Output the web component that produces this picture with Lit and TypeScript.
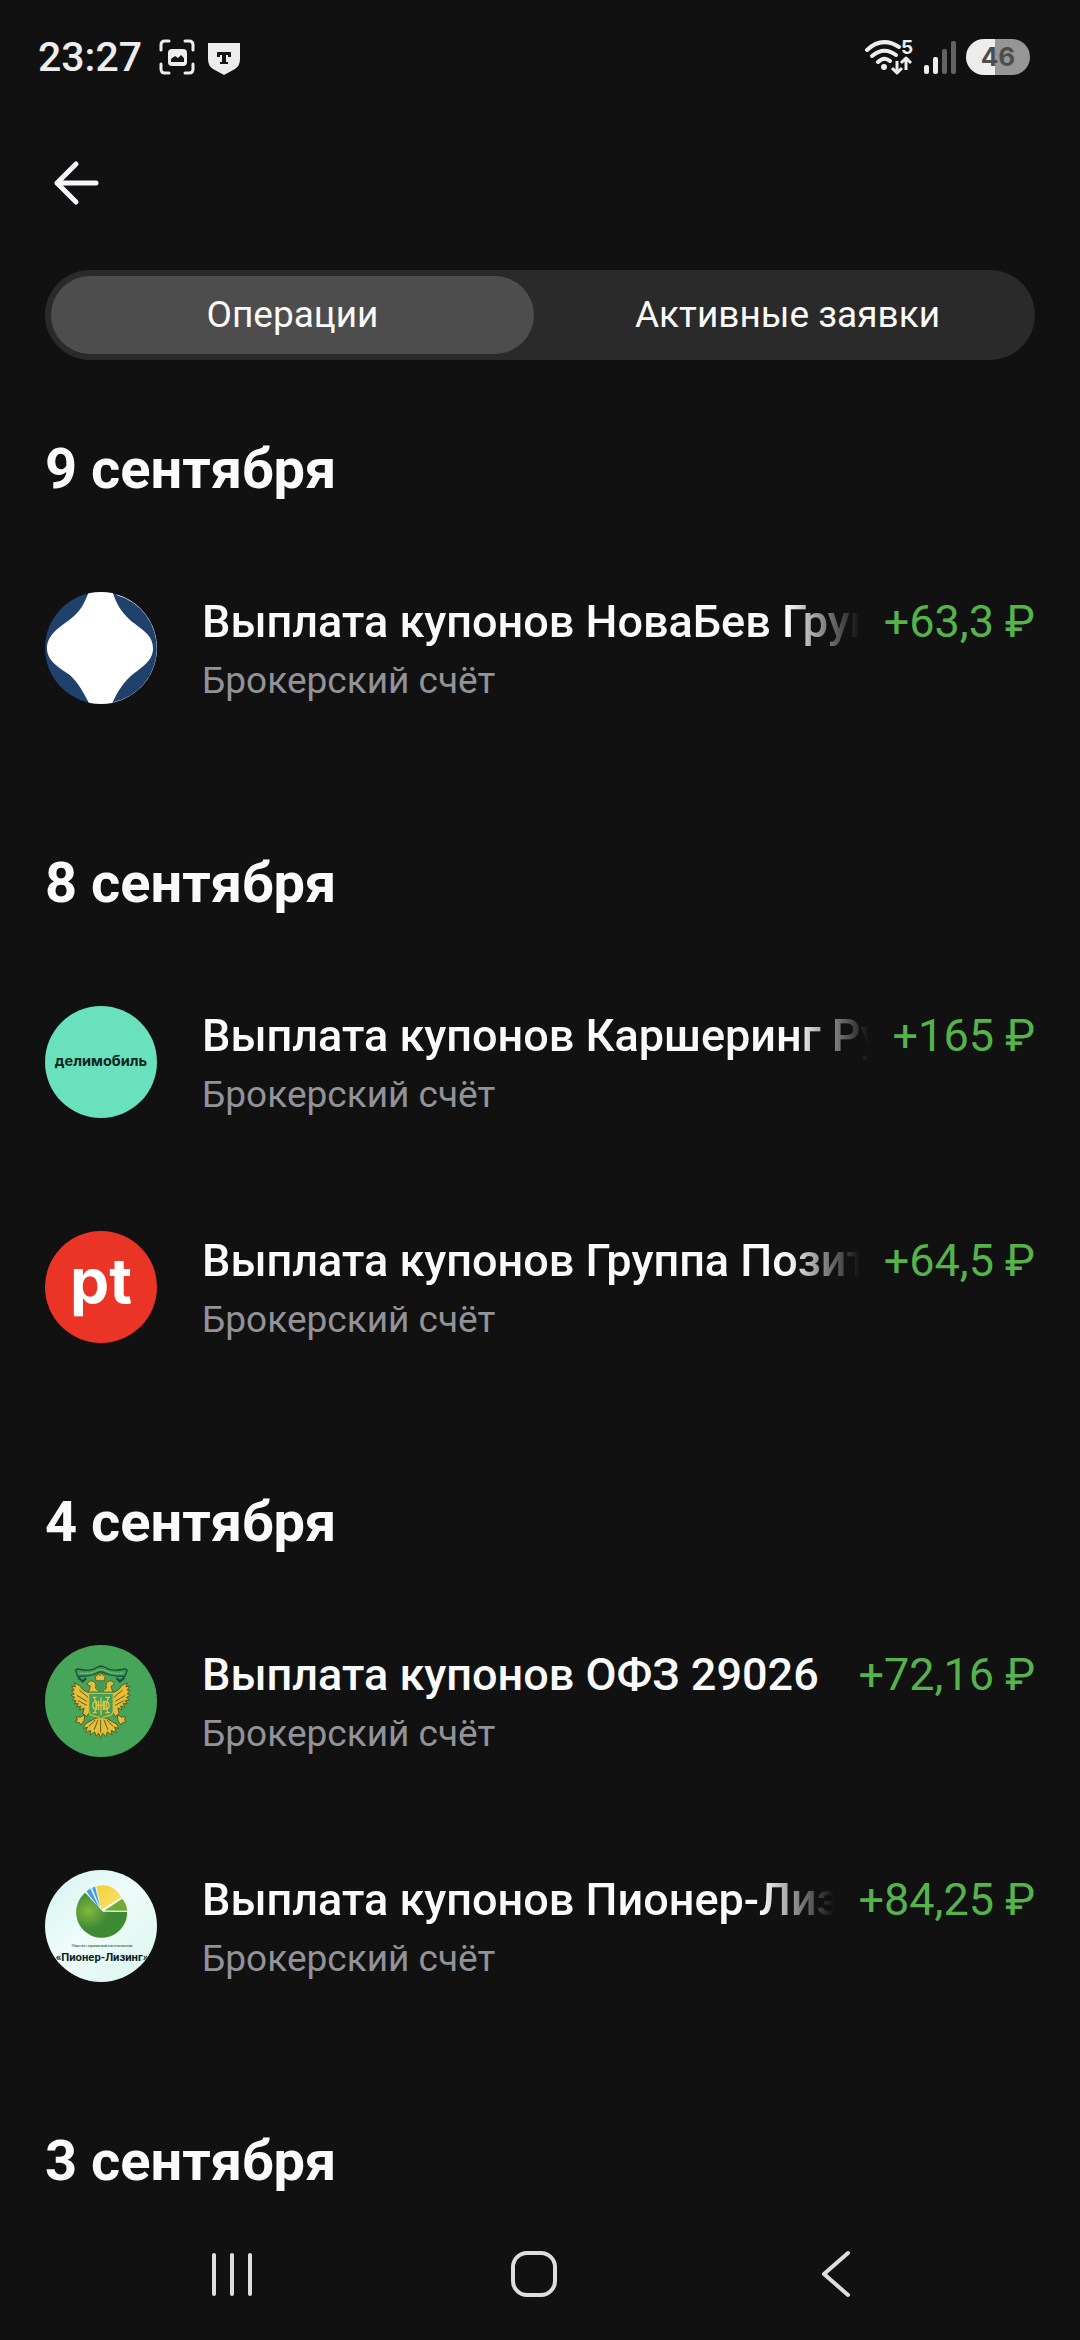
import { LitElement, html, css } from "lit";
import type { TemplateResult } from "lit";
import { customElement, property, state } from "lit/decorators.js";
import { classMap } from "lit/directives/class-map.js";
import { createRef, ref } from "lit/directives/ref.js";

interface Operation {
    logo: TemplateResult;
    title: string;
    account: string;
    amount: string;
}

interface OperationGroup {
    date: string;
    operations: Operation[];
}

const novabevLogo = html`<svg viewBox="46 66 338 338" aria-hidden="true">
    <rect x="46" y="66" width="338" height="338" fill="#1f416b" />
    <path
        fill="#fff"
        d="M178 66C165 102 150 128 120 150C90 172 52 196 52 236C52 274 88 294 120 316C148 342 162 370 180 404H248C262 372 274 350 304 320C340 292 372 274 372 236C372 196 340 180 304 152C274 124 262 102 250 66Z"
    />
    <path d="M262 74A168 168 0 0 1 252 400" fill="none" stroke="#d5dbe3" stroke-width="3" />
</svg>`;

const delimobilLogo = html`<svg viewBox="46 77 338 338" aria-hidden="true">
    <rect x="46" y="77" width="338" height="338" fill="#69e1bd" />
    <text x="215" y="258" text-anchor="middle" font-family="Inter, sans-serif" font-weight="700" font-size="44" fill="#0c2420">делимобиль</text>
</svg>`;

const positiveLogo = html`<svg viewBox="46 62 338 338" aria-hidden="true">
    <rect x="46" y="62" width="338" height="338" fill="#ea3526" />
    <text x="215" y="278" text-anchor="middle" font-family="Inter, sans-serif" font-weight="700" font-size="188" fill="#fff">pt</text>
</svg>`;

const ofzLogo = html`<svg viewBox="46 42 338 338" aria-hidden="true">
    <rect x="46" y="42" width="338" height="338" fill="#47a55a" />
    <!-- ribbon -->
    <path
        d="M138 118Q144 112 154 116Q186 122 202 110Q214 102 228 110Q246 122 276 116Q288 112 294 118L288 136Q250 138 230 128Q214 118 200 128Q180 138 144 136Z"
        fill="#3d9a5b"
        stroke="#17523c"
        stroke-width="4"
    />
    <path d="M150 127Q186 130 202 119Q214 113 228 119Q248 130 282 127" fill="none" stroke="#9cbd58" stroke-width="4" stroke-dasharray="5 2" />
    <path d="M146 140l14 12 10-10M286 140l-14 12-10-10" fill="none" stroke="#17523c" stroke-width="7" />
    <g fill="#e5bd38" stroke="#56601f" stroke-width="3" stroke-linejoin="round">
        <!-- wings -->
        <path d="M178 186Q158 180 150 164L134 156L138 168L126 166L134 178L126 180L134 190L124 194L136 200L128 208L140 210L134 220L146 218L142 230L154 226L150 238L164 232L160 250L172 258L182 240Z" />
        <path d="M252 186Q270 180 278 164L294 156L290 168L302 166L294 178L302 180L294 190L304 194L292 200L300 208L288 210L294 220L282 218L286 230L274 226L278 238L266 232L270 250L258 258L248 240Z" />
        <!-- heads -->
        <path d="M176 184Q184 172 182 166L172 160Q180 146 192 152Q204 158 198 172L212 184ZM252 184Q244 172 246 166L256 160Q248 146 236 152Q226 158 232 172L216 184Z" />
        <path d="M196 130L202 136L206 128L212 134L218 126L222 134L228 130L226 150H200Z" />
        <!-- claws -->
        <path d="M166 252L152 260L140 258L144 268L136 274L150 276L154 284L164 270ZM264 252L278 260L290 258L286 268L292 274L280 276L276 284L266 270Z" />
        <!-- tail -->
        <path d="M200 262L178 274L166 282L162 294L174 290L168 306L184 300L182 314L196 304L200 318L208 308L214 324L220 308L230 318L234 304L248 314L246 300L262 306L256 290L268 294L264 282L250 274L230 262Z" />
    </g>
    <path
        d="M150 178L176 200M142 194L172 212M146 210L172 224M280 178L254 200M288 194L258 212M284 210L258 224M214 266V306M206 268L194 298M224 268L236 298M198 268L178 288M232 268L252 288"
        stroke="#56601f"
        stroke-width="3"
    />
    <path d="M202 150H226L222 176H208Z" fill="#3d9a5b" />
    <path d="M178 188H252V240Q252 254 236 256Q222 258 215 266Q208 258 194 256Q178 254 178 240Z" fill="#43a059" stroke="#d8ba3c" stroke-width="4" />
    <path
        d="M190 200H202M190 246H202M228 200H242M228 246H242M194 200Q206 224 196 246M238 200Q226 224 236 246M202 212Q190 212 190 224Q190 236 202 236ZM226 212Q240 212 240 224Q240 236 226 236ZM215 200V254M208 210V238M222 210V238M202 224H228"
        fill="none"
        stroke="#dfc545"
        stroke-width="4"
    />
</svg>`;

const pioneerLogo = html`<svg viewBox="46 57 338 338" aria-hidden="true">
    <defs>
        <linearGradient id="sky" x1="0" y1="0" x2="1" y2="1">
            <stop offset="0" stop-color="#d3f3ef" />
            <stop offset="0.45" stop-color="#effcfa" />
            <stop offset="1" stop-color="#d9f5ec" />
        </linearGradient>
        <radialGradient id="leaf" cx="0.25" cy="0.4" r="0.8">
            <stop offset="0" stop-color="#83b83c" />
            <stop offset="0.5" stop-color="#3f8a35" />
            <stop offset="1" stop-color="#3b8a30" />
        </radialGradient>
        <linearGradient id="sun" x1="0" y1="0" x2="1" y2="1">
            <stop offset="0" stop-color="#f3cf3c" />
            <stop offset="1" stop-color="#f8e66f" />
        </linearGradient>
    </defs>
    <rect x="46" y="57" width="338" height="338" fill="url(#sky)" />
    <path d="M221 183L167 126A77 77 0 1 0 294 184Z" fill="url(#leaf)" />
    <path d="M226 179L279 144Q293 160 294 180Z" fill="#72a936" />
    <path d="M216 177L201 106Q250 92 277 139Z" fill="url(#sun)" />
    <path d="M211 173L171 122L183 113ZM213 171L188 111L197 107Z" fill="#4b9add" />
    <text x="218" y="288" text-anchor="middle" font-family="'Liberation Serif', serif" font-weight="700" font-size="9" fill="#46645e">Общество с ограниченной ответственностью</text>
    <text x="218" y="331" text-anchor="middle" font-family="Roboto, sans-serif" font-weight="700" font-size="34" fill="#10211f">«Пионер-Лизинг»</text>
</svg>`;

const account = "Брокерский счёт";

const groups: OperationGroup[] = [
    {
        date: "9 сентября",
        operations: [
            { logo: novabevLogo, title: "Выплата купонов НоваБев Групп", account, amount: "+63,3 ₽" },
        ],
    },
    {
        date: "8 сентября",
        operations: [
            { logo: delimobilLogo, title: "Выплата купонов Каршеринг Руссия", account, amount: "+165 ₽" },
            { logo: positiveLogo, title: "Выплата купонов Группа Позитив", account, amount: "+64,5 ₽" },
        ],
    },
    {
        date: "4 сентября",
        operations: [
            { logo: ofzLogo, title: "Выплата купонов ОФЗ 29026", account, amount: "+72,16 ₽" },
            { logo: pioneerLogo, title: "Выплата купонов Пионер-Лизинг", account, amount: "+84,25 ₽" },
        ],
    },
    { date: "3 сентября", operations: [] },
];

@customElement("status-bar")
export class StatusBar extends LitElement {
    render() {
        return html`
            <span class="time">23:27</span>
            <svg class="capture" width="36" height="36" viewBox="0 0 36 36" aria-hidden="true">
                <path
                    d="M2 11V6Q2 2 6 2H10M26 2H30Q34 2 34 6V11M34 25V30Q34 34 30 34H26M10 34H6Q2 34 2 30V25"
                    fill="none"
                    stroke="#ededed"
                    stroke-width="3"
                    stroke-linecap="round"
                />
                <rect x="9" y="10" width="19" height="17" rx="4" fill="#ededed" />
                <path d="M12 23V20L16 17L19 19L22 16L25 19V23Z" fill="#151515" />
            </svg>
            <svg class="shield" width="32" height="32" viewBox="0 0 32 32" aria-hidden="true">
                <path d="M0 0H32V16Q32 23 27 26L16 32L5 26Q0 23 0 16Z" fill="#ededed" />
                <path d="M9 9H23V14H20V12H18V19H20V21H12V19H14V12H12V14H9Z" fill="#151515" />
            </svg>
            <span class="spacer"></span>
            <svg width="50" height="36" viewBox="0 0 50 36" aria-hidden="true">
                <g fill="none" stroke="#ededed" stroke-width="4" stroke-linecap="round">
                    <path d="M3 11Q18 -3 35 8" />
                    <path d="M8 17Q20 7 32 16" />
                    <path d="M14 23Q20 17 26 22" />
                </g>
                <circle cx="20" cy="28" r="3" fill="#ededed" />
                <path
                    d="M33 22V34M28 29L33 34L38 29M42 31V19M37 24L42 19L47 24"
                    fill="none"
                    stroke="#ededed"
                    stroke-width="3"
                    stroke-linejoin="round"
                />
                <text x="43" y="15" text-anchor="middle" font-family="Inter, sans-serif" font-weight="700" font-size="19" fill="#ededed">5</text>
            </svg>
            <svg class="signal" width="32" height="36" viewBox="0 0 32 36" aria-hidden="true">
                <g fill="#ededed">
                    <rect x="0" y="26" width="5" height="9" rx="2" />
                    <rect x="9" y="18" width="5" height="17" rx="2" />
                </g>
                <g fill="#636363">
                    <rect x="18" y="10" width="5" height="25" rx="2" />
                    <rect x="27" y="2" width="5" height="33" rx="2" />
                </g>
            </svg>
            <span class="battery">46</span>
        `;
    }

    static styles = css`
        :host {
            display: flex;
            align-items: center;
            height: 114px;
            padding: 0 50px 0 38px;
        }

        .time {
            font-size: 41px;
            font-weight: 500;
            line-height: 48px;
            color: #ededed;
        }

        .capture {
            margin-left: 17px;
        }

        .shield {
            margin: 4px 0 0 13px;
        }

        .spacer {
            flex: 1;
        }

        .signal {
            margin: 0 10px;
        }

        .battery {
            width: 64px;
            border-radius: 18px;
            background: linear-gradient(90deg, #ededed 45%, #969696 45%);
            color: #4d4d4d;
            font-family: Inter, sans-serif;
            font-size: 26px;
            font-weight: 700;
            line-height: 36px;
            text-align: center;
        }
    `;
}

@customElement("operation-row")
export class OperationRow extends LitElement {
    @property({ attribute: false })
    operation!: Operation;

    @state()
    private overflows = false;

    titleRef = createRef<HTMLElement>();
    observer = new ResizeObserver(() => this.measure());

    // Only a title that does not fit fades out at its end
    measure() {
        const el = this.titleRef.value;
        if (el) this.overflows = el.scrollWidth > el.clientWidth;
    }

    firstUpdated() {
        this.observer.observe(this.titleRef.value!);
    }

    disconnectedCallback(): void {
        super.disconnectedCallback();
        this.observer.disconnect();
    }

    render() {
        const { logo, title, account, amount } = this.operation;
        return html`
            <div class="logo">${logo}</div>
            <div class="content">
                <div class="line">
                    <span
                        class=${classMap({ title: true, faded: this.overflows })}
                        ${ref(this.titleRef)}
                        >${title}</span
                    >
                    <span class="amount">${amount}</span>
                </div>
                <span class="account">${account}</span>
            </div>
        `;
    }

    static styles = css`
        :host {
            display: flex;
            gap: 45px;
            padding: 43px 0 69px;
        }

        .logo {
            width: 112px;
            height: 112px;
            flex: none;
            border-radius: 50%;
            overflow: hidden;
        }

        .logo svg {
            display: block;
            width: 100%;
            height: 100%;
        }

        .content {
            display: flex;
            flex-direction: column;
            gap: 5px;
            flex: 1;
            min-width: 0;
        }

        .line {
            display: flex;
            gap: 24px;
            font-size: 45px;
            line-height: 60px;
            white-space: nowrap;
        }

        .title {
            flex: 1;
            min-width: 0;
            overflow: hidden;
            font-weight: 500;
        }

        .title.faded {
            mask-image: linear-gradient(90deg, #000 calc(100% - 72px), transparent);
        }

        .amount {
            color: #56b34b;
        }

        .account {
            color: #919399;
            font-size: 37px;
            line-height: 48px;
        }
    `;
}

@customElement("app-root")
export class AppRoot extends LitElement {
    @state()
    private activeTab = 0;

    tabs = ["Операции", "Активные заявки"];

    render() {
        return html`
            <status-bar></status-bar>
            <header class="header">
                <button class="back" aria-label="Назад">
                    <svg width="63" height="63" viewBox="0 0 63 63" aria-hidden="true">
                        <path
                            d="M31 13L12 32L31 51M12 32H51"
                            fill="none"
                            stroke="#f8f8fa"
                            stroke-width="5"
                            stroke-linecap="round"
                            stroke-linejoin="round"
                        />
                    </svg>
                </button>
            </header>
            <div class="tabs" role="tablist">
                ${this.tabs.map(
                    (label, i) => html`<button
                        class=${classMap({ tab: true, active: i === this.activeTab })}
                        role="tab"
                        aria-selected=${i === this.activeTab}
                        @click=${() => (this.activeTab = i)}
                    >
                        ${label}
                    </button>`,
                )}
            </div>
            <main class="feed">
                ${groups.map(
                    (group) => html`<section class="group">
                        <h2 class="date">${group.date}</h2>
                        ${group.operations.map(
                            (operation) =>
                                html`<operation-row .operation=${operation}></operation-row>`,
                        )}
                    </section>`,
                )}
            </main>
            <nav class="system-nav">
                <button class="key" aria-label="Недавние">
                    <svg width="54" height="54" viewBox="0 0 54 54" aria-hidden="true">
                        <path d="M9 8V47M27 8V47M45 8V47" stroke="#dedede" stroke-width="4" stroke-linecap="round" />
                    </svg>
                </button>
                <button class="key" aria-label="Домой">
                    <svg width="54" height="54" viewBox="0 0 54 54" aria-hidden="true">
                        <rect x="6" y="6" width="42" height="42" rx="14" fill="none" stroke="#dedede" stroke-width="4" />
                    </svg>
                </button>
                <button class="key" aria-label="Назад">
                    <svg width="54" height="54" viewBox="0 0 54 54" aria-hidden="true">
                        <path
                            d="M39 6L15 27L39 48"
                            fill="none"
                            stroke="#dedede"
                            stroke-width="4"
                            stroke-linecap="round"
                            stroke-linejoin="round"
                        />
                    </svg>
                </button>
            </nav>
        `;
    }

    static styles = css`
        :host {
            display: flex;
            flex-direction: column;
            min-height: 100vh;
            background: #111;
            color: #fafafa;
            font-family: Roboto, sans-serif;
        }

        button {
            padding: 0;
            border: none;
            background: none;
            color: inherit;
            font: inherit;
            cursor: pointer;
        }

        svg {
            display: block;
        }

        .header {
            display: flex;
            align-items: center;
            height: 136px;
            padding: 0 45px;
        }

        .tabs {
            display: flex;
            gap: 12px;
            margin: 20px 45px 0;
            padding: 6px;
            border-radius: 45px;
            background: #2a2a2a;
        }

        .tab {
            flex: 1;
            border-radius: 39px;
            font-size: 37px;
            line-height: 78px;
        }

        .tab.active {
            background: #4d4d4d;
        }

        .feed {
            flex: 1;
            padding: 0 45px;
        }

        .group {
            padding-top: 79px;
        }

        .date {
            margin: 0;
            font-size: 56px;
            font-weight: 700;
            line-height: 60px;
        }

        .date + operation-row {
            margin-top: 50px;
        }

        .system-nav {
            position: sticky;
            bottom: 0;
            display: flex;
            height: 132px;
            padding: 0 93px 0 81px;
            background: #111;
        }

        .key {
            display: grid;
            place-items: center;
            flex: 1;
        }
    `;
}
